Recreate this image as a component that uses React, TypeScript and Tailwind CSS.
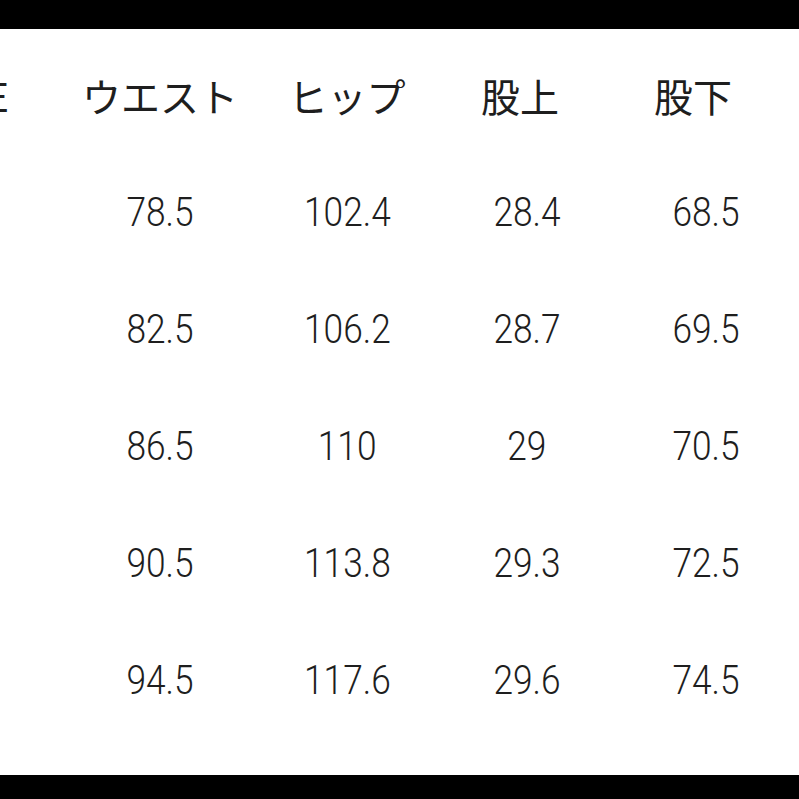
import React from 'react';

const headers = ['SIZE', 'ウエスト', 'ヒップ', '股上', '股下'];

const rows: string[][] = [
  ['', '78.5', '102.4', '28.4', '68.5'],
  ['', '82.5', '106.2', '28.7', '69.5'],
  ['', '86.5', '110', '29', '70.5'],
  ['', '90.5', '113.8', '29.3', '72.5'],
  ['', '94.5', '117.6', '29.6', '74.5'],
];

// header cells sit a little left of the numbers in the last two columns
const headerPad = ['pr-[61px] justify-end', 'justify-center', 'justify-center', 'justify-center pr-[14px]', 'justify-center pr-[26px]'];
const cellAlign = ['justify-end', 'justify-center', 'justify-center', 'justify-center', 'justify-center'];

export default function App() {
  return (
    <div className="w-[799px] h-[799px] flex flex-col bg-white overflow-hidden">
      <div className="h-[29px] bg-black shrink-0" />
      <div className="flex-1 pt-[8px] text-[#1e1e1e]">
        <div className="grid grid-cols-[70px_180px_194px_166px_192px] h-[117px] items-center font-['Noto_Sans_CJK_JP',sans-serif] text-[39px] leading-none">
          {headers.map((h, i) => (
            <div key={h} className={`flex ${headerPad[i]}`}>
              <span className="whitespace-nowrap">{h}</span>
            </div>
          ))}
        </div>
        {rows.map((row, r) => (
          <div
            key={r}
            className="grid grid-cols-[70px_180px_194px_166px_192px] h-[117px] items-center font-['Roboto',sans-serif] font-light text-[41px] leading-none"
          >
            {row.map((v, i) => (
              <div key={i} className={`flex ${cellAlign[i]}`}>
                <span className="inline-block scale-x-[0.86] whitespace-nowrap">{v}</span>
              </div>
            ))}
          </div>
        ))}
      </div>
      <div className="h-[24px] bg-black shrink-0" />
    </div>
  );
}
